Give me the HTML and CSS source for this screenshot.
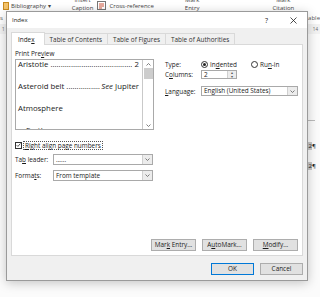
FILE: index.html
```html
<!DOCTYPE html>
<html lang="en">
<head>
    <meta charset="UTF-8">
    <meta name="viewport" content="width=device-width, initial-scale=1.0">
    <title>Index</title>
    <link rel="stylesheet" href="styles.css">
</head>
<body>
    <div class="word">
        <div class="ribbon">
            <div class="rb-item bib">
                <svg class="bib-icon" width="6" height="8" viewBox="0 0 6 8"><rect x="0.5" y="0.5" width="5" height="7" fill="#f4c36b" stroke="#c98a1d" stroke-width="1"/></svg>
                <span>Bibliography ▾</span>
            </div>
            <div class="rb-item two caption"><span>Insert</span><span>Caption</span></div>
            <div class="rb-item xref">
                <svg width="9" height="9" viewBox="0 0 9 9"><rect x="0.5" y="0.5" width="8" height="8" fill="#fff" stroke="#777"/><path d="M2 3h5M2 5h5M2 7h3" stroke="#d0573c" stroke-width="1"/></svg>
                <span>Cross-reference</span>
            </div>
            <div class="rb-item two mark-entry"><span>Mark</span><span>Entry</span></div>
            <div class="rb-item two mark-citation"><span>Mark</span><span>Citation</span></div>
        </div>
        <div class="groups"><span>s</span><span>able</span></div>
        <div class="ruler"><span>1</span><span>14</span></div>
        <div class="doc">
            <div class="doc-col">
                <div class="doc-line"></div>
                <div class="doc-mark"><span class="hl">.2</span>¶</div>
                <div class="doc-mark"><span class="hl">.2</span>¶</div>
            </div>
        </div>
    </div>

    <div class="dialog">
        <div class="titlebar">
            <span class="title">Index</span>
            <span class="help">?</span>
            <svg class="close" width="7" height="7" viewBox="0 0 7 7"><path d="M0.5 0.5l6 6M6.5 0.5l-6 6" stroke="#222" stroke-width="0.8"/></svg>
        </div>
        <div class="dlg-body">
            <div class="tabs">
                <div class="tab active">Inde<u>x</u></div>
                <div class="tab">Table of Contents</div>
                <div class="tab">Table of Figures</div>
                <div class="tab">Table of Authorities</div>
            </div>
            <div class="panel">
                <div class="top-row">
                    <div class="preview-col">
                        <div class="label">Print Pre<u>v</u>iew</div>
                        <div class="preview">
                            <div class="preview-text">
                                <div class="idx-entry"><span>Aristotle</span><span class="dots gap"></span><span>2</span></div>
                                <div class="idx-entry"><span>Asteroid belt</span><span class="dots"></span><span><i>See</i> Jupiter</span></div>
                                <div class="idx-entry"><span>Atmosphere</span></div>
                                <div class="idx-entry sub"><span>Earth</span></div>
                            </div>
                            <div class="scrollbar">
                                <svg width="5" height="3" viewBox="0 0 5 3"><path d="M0.5 2.5l2-2 2 2" fill="none" stroke="#606060" stroke-width="0.8"/></svg>
                                <div class="thumb"></div>
                                <div class="track"></div>
                                <svg width="5" height="3" viewBox="0 0 5 3"><path d="M0.5 0.5l2 2 2-2" fill="none" stroke="#606060" stroke-width="0.8"/></svg>
                            </div>
                        </div>
                    </div>
                    <div class="options">
                        <div class="opt-row type-row">
                            <span class="opt-label">Type:</span>
                            <span class="radio checked"></span><span class="radio-text">In<u>d</u>ented</span>
                            <span class="radio"></span><span class="radio-text">Ru<u>n</u>-in</span>
                        </div>
                        <div class="opt-row">
                            <span class="opt-label">C<u>o</u>lumns:</span>
                            <div class="spinner">
                                <span class="spin-val">2</span>
                                <div class="spin-btns">
                                    <span class="spin-btn">▴</span>
                                    <span class="spin-btn">▾</span>
                                </div>
                            </div>
                        </div>
                        <div class="opt-row lang-row">
                            <span class="opt-label"><u>L</u>anguage:</span>
                            <div class="select lang">
                                <span class="sel-val">English (United States)</span>
                                <span class="sel-arrow"><svg width="5" height="3" viewBox="0 0 5 3"><path d="M0.5 0.5l2 2 2-2" fill="none" stroke="#606060" stroke-width="0.8"/></svg></span>
                            </div>
                        </div>
                    </div>
                </div>

                <div class="check-row">
                    <span class="checkbox"><svg width="6" height="6" viewBox="0 0 6 6"><path d="M0.8 3.2l1.5 1.5 3-3.5" fill="none" stroke="#222" stroke-width="0.9"/></svg></span>
                    <span class="check-text"><u>R</u>ight align page numbers</span>
                </div>
                <div class="field-row">
                    <span class="field-label">Ta<u>b</u> leader:</span>
                    <div class="select wide">
                        <span class="sel-val">......</span>
                        <span class="sel-arrow"><svg width="5" height="3" viewBox="0 0 5 3"><path d="M0.5 0.5l2 2 2-2" fill="none" stroke="#606060" stroke-width="0.8"/></svg></span>
                    </div>
                </div>
                <div class="field-row">
                    <span class="field-label">Forma<u>t</u>s:</span>
                    <div class="select wide">
                        <span class="sel-val">From template</span>
                        <span class="sel-arrow"><svg width="5" height="3" viewBox="0 0 5 3"><path d="M0.5 0.5l2 2 2-2" fill="none" stroke="#606060" stroke-width="0.8"/></svg></span>
                    </div>
                </div>

                <div class="panel-buttons">
                    <button class="btn">Mar<u>k</u> Entry...</button>
                    <button class="btn">A<u>u</u>toMark...</button>
                    <button class="btn"><u>M</u>odify...</button>
                </div>
            </div>
            <div class="footer">
                <button class="btn small default">OK</button>
                <button class="btn small">Cancel</button>
            </div>
        </div>
    </div>
</body>
</html>
```

FILE: styles.css
```css
body {
    margin: 0;
    width: 320px;
    height: 297px;
    overflow: hidden;
    position: relative;
    background: #fff;
    color: #1a1a1a;
    font-family: "Open Sans", "Noto Sans", sans-serif;
    font-size: 6.4px;
}
u {
    text-underline-offset: 1px;
    text-decoration-thickness: 0.5px;
}

/* --- Word window behind the dialog --- */
.word {
    display: flex;
    flex-direction: column;
    height: 297px;
}
.ribbon {
    height: 11px;
    display: flex;
    align-items: flex-end;
    overflow: hidden;
    color: #444;
    font-size: 6px;
    white-space: nowrap;
}
.rb-item {
    display: flex;
    align-items: center;
    gap: 2px;
}
.bib {
    margin-left: 3px;
    height: 11px;
}
.bib-icon {
    margin-top: 1px;
}
/* two-line ribbon buttons: the top line runs off the screen edge */
.two {
    flex-direction: column;
    align-items: center;
    gap: 0;
    line-height: 8px;
    margin-bottom: -0.5px;
}
.caption {
    margin-left: 21px;
}
.xref {
    margin-left: 4px;
    height: 11px;
    gap: 3px;
}
.mark-entry {
    margin-left: 31px;
}
.mark-citation {
    margin-left: 73px;
}
.groups {
    height: 13px;
    display: flex;
    justify-content: space-between;
    align-items: center;
    color: #555;
    font-size: 6px;
}
.ruler {
    height: 10px;
    display: flex;
    justify-content: space-between;
    align-items: center;
    padding: 0 2px;
    background: #f2f2f2;
    color: #666;
    font-size: 4.5px;
}
.doc {
    flex: 1;
    display: flex;
    justify-content: flex-end;
    background: #fbfbfb;
}
.doc-col {
    width: 13px;
    padding-top: 86px;
    font-size: 6px;
}
.doc-line {
    width: 8px;
    height: 1px;
    background: #bbb;
    margin-bottom: 21px;
}
.doc-mark {
    height: 8px;
    line-height: 8px;
    margin-bottom: 12px;
    color: #222;
}
.hl {
    background: #c8c8c8;
}

/* --- Index dialog --- */
.dialog {
    position: absolute;
    left: 6px;
    top: 11px;
    width: 302px;
    height: 270px;
    box-sizing: border-box;
    border: 1px solid #9a9a9a;
    background: #f0f0f0;
    box-shadow: 0 2px 10px rgba(0, 0, 0, 0.22);
    display: flex;
    flex-direction: column;
}
.titlebar {
    height: 16px;
    background: #fff;
    display: flex;
    align-items: center;
    padding-left: 5px;
    font-size: 6px;
}
.title {
    flex: 1;
}
.help {
    font-size: 7px;
    margin-right: 22px;
}
.close {
    margin-right: 10px;
}
.dlg-body {
    flex: 1;
    display: flex;
    flex-direction: column;
    padding: 4px 4px 0 4px;
}
.tabs {
    display: flex;
    align-items: flex-end;
    padding-left: 2px;
    height: 13px;
}
.tab {
    height: 12px;
    line-height: 12px;
    padding: 0 5px;
    box-sizing: border-box;
    border: 1px solid #d9d9d9;
    border-bottom: none;
    margin-left: -1px;
    color: #333;
    background: #f0f0f0;
}
.tab.active {
    height: 13px;
    line-height: 13px;
    margin-left: -2px;
    padding: 0 9px 0 6px;
    background: #fff;
    color: #1a1a1a;
    position: relative;
    z-index: 1;
}
.panel {
    flex: 1;
    background: #fff;
    border: 1px solid #d9d9d9;
    margin-top: -1px;
    display: flex;
    flex-direction: column;
    padding: 5px 4px 4px 3px;
}
.top-row {
    display: flex;
    gap: 11px;
}
.preview-col {
    width: 139px;
}
.label {
    line-height: 8px;
    height: 8px;
    margin-bottom: 1px;
}
.preview {
    height: 71px;
    box-sizing: border-box;
    border: 1px solid #a9a9a9;
    display: flex;
    overflow: hidden;
}
.preview-text {
    flex: 1;
    border-right: 1px solid #c9c9c9;
    padding: 0 3px 0 2px;
    font-size: 7.8px;
    overflow: hidden;
}
.idx-entry {
    display: flex;
    line-height: 9px;
    height: 9px;
    margin-bottom: 13px;
    white-space: nowrap;
}
.idx-entry.sub {
    padding-left: 8px;
}
.dots {
    flex: 1;
    overflow: hidden;
    margin: 0 1px 0 2px;
}
.dots.gap {
    margin-right: 3px;
}
.dots::before {
    content: "....................................................................................";
}
.scrollbar {
    width: 10px;
    display: flex;
    flex-direction: column;
    align-items: center;
    padding: 3px 0 2px;
}
.thumb {
    width: 9px;
    height: 11px;
    margin-top: 2px;
    background: #cdcdcd;
}
.track {
    flex: 1;
}
.options {
    flex: 1;
    display: flex;
    flex-direction: column;
    gap: 1px;
    padding-top: 10px;
}
.opt-row {
    display: flex;
    align-items: center;
    height: 9px;
}
.lang-row {
    height: 10px;
    margin-top: 6px;
}
.opt-label {
    width: 36px;
}
.radio {
    width: 7px;
    height: 7px;
    border: 0.8px solid #333;
    border-radius: 50%;
    box-sizing: border-box;
    display: flex;
    align-items: center;
    justify-content: center;
    margin-right: 2px;
}
.radio.checked::after {
    content: "";
    width: 3.5px;
    height: 3.5px;
    border-radius: 50%;
    background: #222;
}
.radio-text {
    width: 41px;
}
.spinner {
    width: 36px;
    height: 9px;
    box-sizing: border-box;
    border: 1px solid #a9a9a9;
    display: flex;
}
.spin-val {
    flex: 1;
    padding-left: 2px;
    line-height: 7px;
}
.spin-btns {
    width: 8px;
    display: flex;
    flex-direction: column;
    border-left: 1px solid #d0d0d0;
    background: #ececec;
}
.spin-btn {
    flex: 1;
    font-size: 4px;
    line-height: 3.5px;
    text-align: center;
    color: #555;
}
.select {
    height: 10px;
    box-sizing: border-box;
    border: 1px solid #a9a9a9;
    display: flex;
    background: #fff;
}
.select.lang {
    width: 97px;
}
.select.wide {
    width: 100px;
    height: 11px;
}
.sel-val {
    flex: 1;
    padding-left: 2px;
    line-height: 8px;
    white-space: nowrap;
    overflow: hidden;
}
.select.wide .sel-val {
    line-height: 9px;
}
.sel-arrow {
    width: 9px;
    border-left: 1px solid #d0d0d0;
    background: #ececec;
    display: flex;
    align-items: center;
    justify-content: center;
}
.check-row {
    display: flex;
    align-items: center;
    margin-top: 11px;
    height: 8px;
}
.checkbox {
    width: 7px;
    height: 7px;
    box-sizing: border-box;
    border: 0.8px solid #333;
    display: flex;
    align-items: center;
    justify-content: center;
    margin-right: 1px;
}
.check-text {
    border: 0.6px dotted #555;
    padding: 0 1px;
    line-height: 7px;
}
.field-row {
    display: flex;
    align-items: center;
    margin-top: 5px;
}
.field-label {
    width: 38px;
}
.panel-buttons {
    margin-top: auto;
    display: flex;
    justify-content: flex-end;
    gap: 6px;
}
.btn {
    width: 45px;
    height: 12px;
    padding: 0;
    box-sizing: border-box;
    border: 1px solid #adadad;
    background: #e1e1e1;
    color: #1a1a1a;
    font-family: inherit;
    font-size: 6.4px;
    line-height: 10px;
}
.footer {
    height: 24px;
    display: flex;
    justify-content: flex-end;
    align-items: flex-start;
    gap: 6px;
    padding-top: 7px;
    box-sizing: border-box;
}
.btn.small {
    width: 43px;
}
.btn.default {
    border-color: #0078d7;
}
```
